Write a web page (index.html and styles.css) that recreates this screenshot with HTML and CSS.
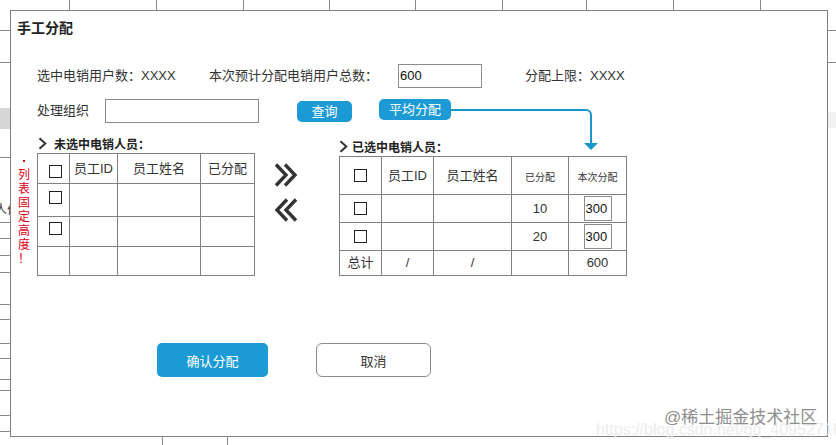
FILE: index.html
```html
<!DOCTYPE html>
<html lang="zh-CN">
<head>
<meta charset="utf-8">
<title>手工分配</title>
<link rel="stylesheet" href="styles.css">
</head>
<body>
<div class="page">
  <svg class="backdrop" width="836" height="445" viewBox="0 0 836 445" aria-hidden="true">
    <rect x="0" y="108" width="10" height="21" fill="#d6d6d6"/>
    <rect x="828" y="112" width="8" height="16" fill="#f1f1f1"/>
    <g stroke="#8a8a8a" stroke-width="1" fill="none">
      <path d="M69.5 0V10M156.5 0V10M243.5 0V10M329.5 0V10M415.5 0V10M502.5 0V10M586.5 0V10M673.5 0V10M760.5 0V10"/>
      <path d="M0 30.5H10M0 62.5H10M828 30.5H836M828 62.5H836"/>
      <path d="M0 157.5H10M0 222.5H10M0 238.5H10M0 255.5H10M0 272.5H10M0 304.5H10M0 319.5H10M0 343.5H10M0 358.5H10M0 379.5H10M0 390.5H10M0 415.5H10M0 431.5H10"/>
      <path d="M162.5 437V445M227.5 437V445"/>
    </g>
    <text class="edge-text" x="-5" y="214">人价</text>
  </svg>

  <div class="dialog">
    <div class="title">手工分配</div>

    <div class="row row1">
      <span class="lbl w1">选中电销用户数：XXXX</span>
      <span class="lbl w2">本次预计分配电销用户总数：</span>
      <span class="field f-total">600</span>
      <span class="lbl limit">分配上限：XXXX</span>
    </div>

    <div class="row row2">
      <span class="lbl w3">处理组织</span>
      <span class="field f-org"></span>
      <button class="btn btn-query">查询</button>
      <button class="btn btn-avg">平均分配</button>
    </div>

    <div class="main">
      <div class="note">
        <span class="dot"></span><span>列</span><span>表</span><span>固</span><span>定</span><span>高</span><span>度</span><span>！</span>
      </div>

      <div class="panel panel-left">
        <div class="panel-head">
          <svg class="chev" width="9" height="13" viewBox="0 0 9 13"><path d="M1.5 1.2L7.3 6.5L1.5 11.8" fill="none" stroke="#333" stroke-width="2"/></svg>
          <span>未选中电销人员：</span>
        </div>
        <div class="grid grid-left">
          <div class="cell cell-cb cb-h"><span class="cb"></span></div>
          <div class="cell">员工ID</div>
          <div class="cell">员工姓名</div>
          <div class="cell">已分配</div>

          <div class="cell cell-cb cb-1"><span class="cb"></span></div>
          <div class="cell"></div>
          <div class="cell"></div>
          <div class="cell"></div>

          <div class="cell cell-cb cb-2"><span class="cb"></span></div>
          <div class="cell"></div>
          <div class="cell"></div>
          <div class="cell"></div>

          <div class="cell"></div>
          <div class="cell"></div>
          <div class="cell"></div>
          <div class="cell"></div>
        </div>
      </div>

      <div class="movers">
        <svg width="24" height="24" viewBox="0 0 24 24"><path d="M2 1.5L12 12L2 22.5M11 1.5L21 12L11 22.5" fill="none" stroke="#333" stroke-width="3.4"/></svg>
        <svg width="24" height="24" viewBox="0 0 24 24"><path d="M22 1.5L12 12L22 22.5M13 1.5L3 12L13 22.5" fill="none" stroke="#333" stroke-width="3.4"/></svg>
      </div>

      <div class="panel panel-right">
        <div class="panel-head">
          <svg class="chev" width="9" height="13" viewBox="0 0 9 13"><path d="M1.5 1.2L7.3 6.5L1.5 11.8" fill="none" stroke="#333" stroke-width="2"/></svg>
          <span>已选中电销人员：</span>
        </div>
        <div class="grid grid-right">
          <div class="cell"><span class="cb"></span></div>
          <div class="cell">员工ID</div>
          <div class="cell">员工姓名</div>
          <div class="cell small">已分配</div>
          <div class="cell small">本次分配</div>

          <div class="cell"><span class="cb"></span></div>
          <div class="cell"></div>
          <div class="cell"></div>
          <div class="cell">10</div>
          <div class="cell"><span class="amt">300</span></div>

          <div class="cell"><span class="cb"></span></div>
          <div class="cell"></div>
          <div class="cell"></div>
          <div class="cell">20</div>
          <div class="cell"><span class="amt">300</span></div>

          <div class="cell">总计</div>
          <div class="cell">/</div>
          <div class="cell">/</div>
          <div class="cell"></div>
          <div class="cell">600</div>
        </div>
      </div>
    </div>

    <div class="actions">
      <button class="btn-primary">确认分配</button>
      <button class="btn-cancel">取消</button>
    </div>

    <svg class="connector" width="170" height="60" viewBox="0 0 170 60" aria-hidden="true">
      <path d="M8 9H145A5 5 0 0 1 150 14V43" fill="none" stroke="#1b96c8" stroke-width="2"/>
      <path d="M143 42H157L150 49Z" fill="#1b96c8"/>
    </svg>
  </div>

  <div class="url">https://blog.csdn.net/qq_40952718</div>
  <div class="watermark">@稀土掘金技术社区</div>
</div>
</body>
</html>
```

FILE: styles.css
```css
* {
  box-sizing: border-box;
}

html,
body {
  margin: 0;
  padding: 0;
  background: #fff;
}

body {
  font-family: "Liberation Sans", "Noto Sans CJK SC", sans-serif;
  font-size: 13px;
  color: #333;
}

.page {
  position: relative;
  width: 836px;
  height: 445px;
  overflow: hidden;
  padding: 10px 0 0 10px;
}

.backdrop {
  position: absolute;
  left: 0;
  top: 0;
}

.edge-text {
  font-size: 12px;
  fill: #333;
}

.dialog {
  position: relative;
  width: 818px;
  height: 427px;
  border: 1px solid #808080;
  background: #fff;
}

.title {
  height: 27px;
  padding: 7px 0 0 6px;
  line-height: 20px;
  font-size: 14px;
  font-weight: bold;
  color: #222;
}

.row {
  display: flex;
  align-items: center;
  height: 24px;
  padding-left: 26px;
}

.row1 {
  margin-top: 26px;
}

.row2 {
  margin-top: 11px;
}

.lbl {
  line-height: 20px;
  white-space: nowrap;
}

.w1 {
  width: 172px;
}

.w2 {
  width: 189px;
}

.w3 {
  width: 68px;
}

.limit {
  margin-left: 43px;
}

.field {
  height: 24px;
  border: 1px solid #8c8c8c;
  background: #fff;
  color: #111;
  line-height: 22px;
  padding-left: 1px;
}

.f-total {
  width: 84px;
}

.f-org {
  width: 154px;
}

.btn {
  border: 0;
  margin: 0;
  padding: 0;
  font: inherit;
  background: #1b9ad6;
  color: #fff;
  border-radius: 5px;
  height: 21px;
  line-height: 21px;
  text-align: center;
}

.btn-query {
  width: 55px;
  margin-left: 38px;
}

.btn-avg {
  width: 72px;
  margin-left: 27px;
  align-self: flex-start;
}

.main {
  display: flex;
  align-items: flex-start;
  margin-top: 11px;
  padding-left: 6px;
}

.note {
  display: flex;
  flex-direction: column;
  align-items: center;
  width: 14px;
  margin-top: 20px;
  color: #de0016;
  font-size: 12px;
  line-height: 14px;
}

.note span {
  display: block;
  height: 14px;
}

.note .dot {
  width: 2px;
  height: 2px;
  margin: 6px 0;
  background: #de0016;
}

.panel-left {
  margin-left: 6px;
}

.panel-right {
  margin-left: 41px;
  padding-top: 3px;
}

.panel-head {
  display: flex;
  align-items: center;
  height: 18px;
  margin-bottom: 1px;
  font-size: 12px;
  font-weight: bold;
  color: #222;
  white-space: nowrap;
}

.chev {
  display: block;
}

.panel-left .chev {
  margin-left: 1px;
  margin-right: 7px;
}

.panel-right .chev {
  margin-right: 4px;
}

.movers {
  display: flex;
  flex-direction: column;
  gap: 11px;
  margin-left: 19px;
  margin-top: 29px;
}

.movers svg {
  display: block;
}

.grid {
  display: grid;
  gap: 1px;
  padding: 1px;
  background: #808080;
}

.grid-left {
  grid-template-columns: 31px 47px 82px 53px;
  grid-template-rows: 29px 32px 29px 28px;
}

.grid-right {
  grid-template-columns: 41px 51px 77px 56px 57px;
  grid-template-rows: 37px 27px 27px 24px;
}

.cell {
  display: flex;
  align-items: center;
  justify-content: center;
  background: #fff;
  line-height: 16px;
  white-space: nowrap;
  color: #333;
}

.cell-cb {
  align-items: flex-start;
  justify-content: flex-start;
  padding-left: 11px;
}

.cb-h {
  padding-top: 11px;
}

.cb-1 {
  padding-top: 7px;
}

.cb-2 {
  padding-top: 5px;
}

.cb {
  display: block;
  width: 13px;
  height: 13px;
  border: 1px solid #222;
  background: #fff;
}

.small {
  font-size: 10px;
  padding-top: 4px;
}

.amt {
  display: block;
  width: 28px;
  height: 25px;
  border: 1px solid #8c8c8c;
  line-height: 23px;
  padding-left: 1px;
  color: #111;
}

.actions {
  display: flex;
  gap: 48px;
  margin-top: 67px;
  padding-left: 146px;
}

.btn-primary,
.btn-cancel {
  height: 34px;
  margin: 0;
  padding: 0;
  font-family: "Liberation Sans", "Noto Sans CJK SC", sans-serif;
  font-size: 13px;
  text-align: center;
}

.btn-primary {
  width: 111px;
  border: 0;
  border-radius: 5px;
  background: #1b9ad6;
  color: #fff;
}

.btn-cancel {
  width: 115px;
  border: 1px solid #8c8c8c;
  border-radius: 6px;
  background: #fff;
  color: #333;
}

.connector {
  position: absolute;
  left: 430px;
  top: 90px;
}

.url {
  position: absolute;
  left: 596px;
  top: 418px;
  font-size: 16px;
  line-height: 24px;
  color: #ececec;
  white-space: nowrap;
}

.watermark {
  position: absolute;
  left: 664px;
  top: 406px;
  font-size: 17px;
  line-height: 24px;
  color: #8e8e8e;
  white-space: nowrap;
}
```
